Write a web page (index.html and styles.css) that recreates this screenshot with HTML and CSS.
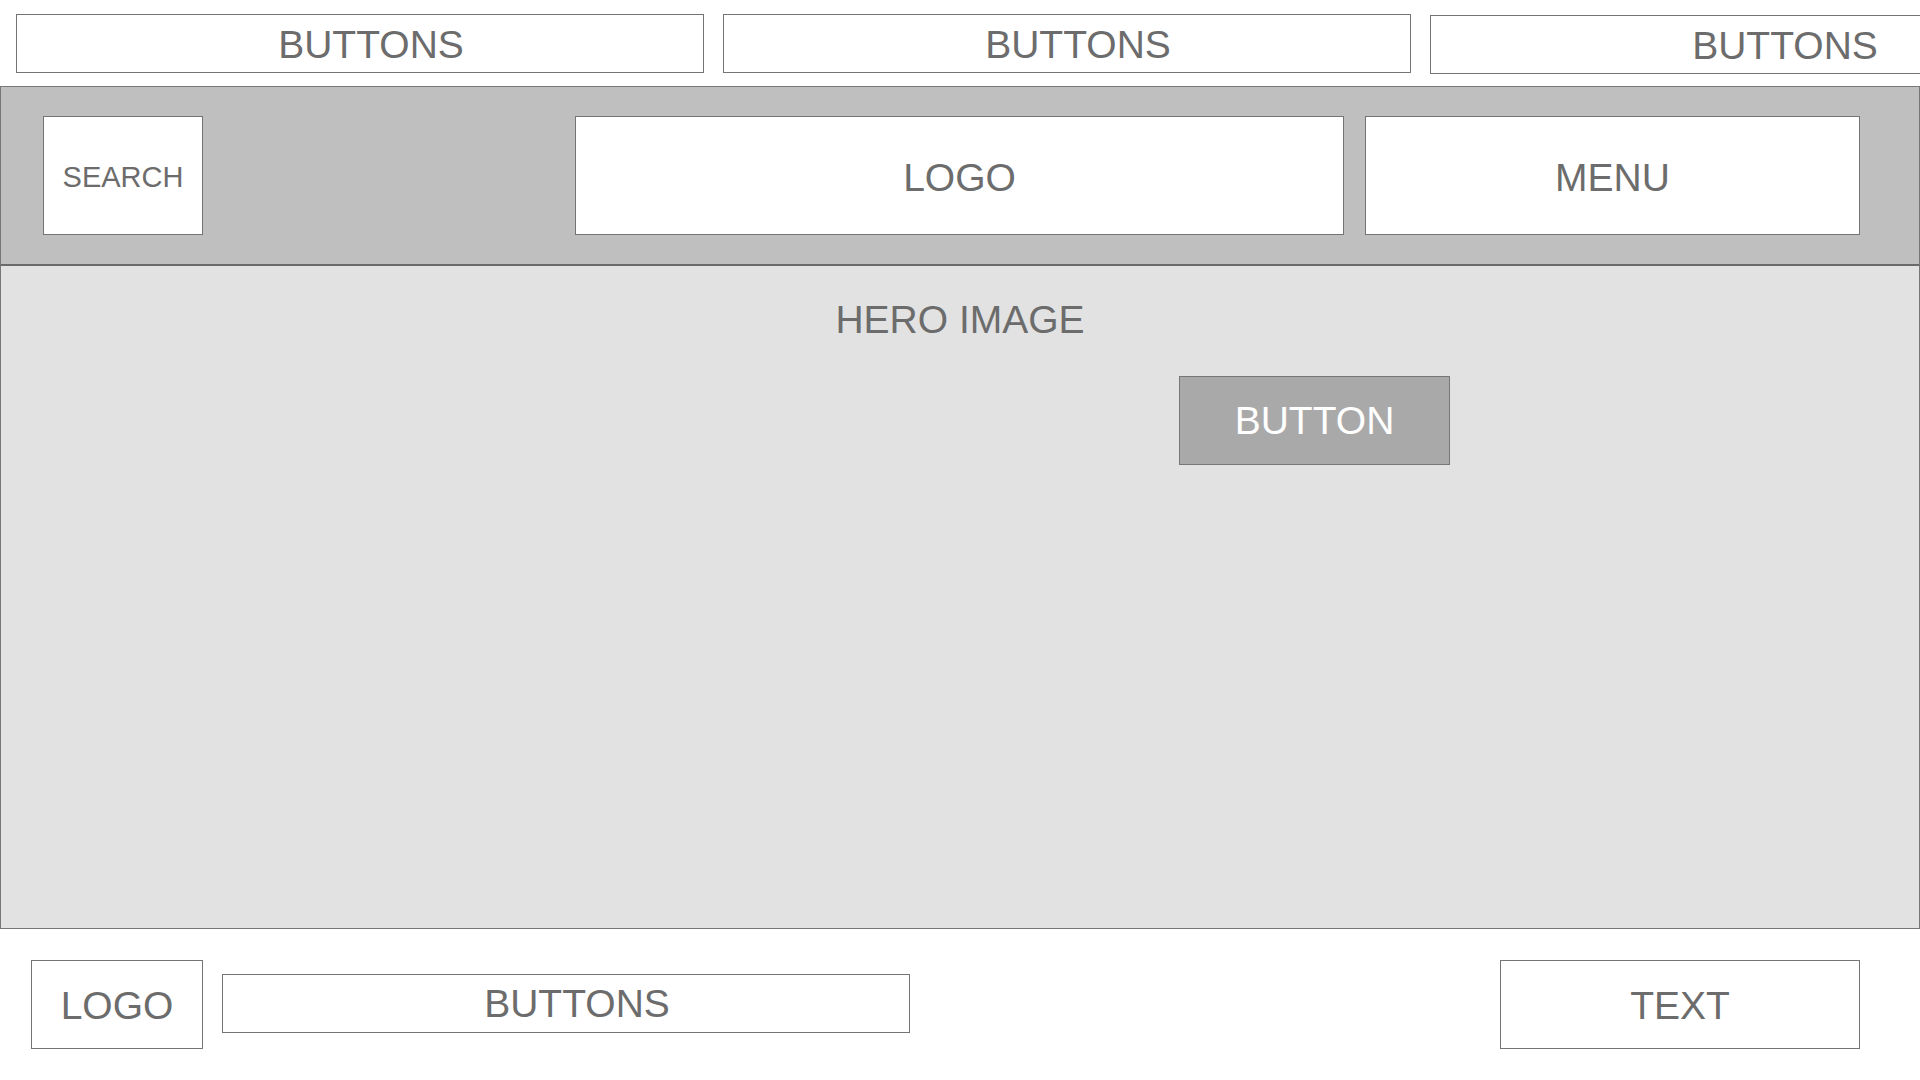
FILE: index.html
```html
<!DOCTYPE html>
<html lang="en">
<head>
<meta charset="utf-8">
<title>Wireframe</title>
<link rel="stylesheet" href="styles.css">
</head>
<body>
<div class="page">
  <div class="topbar">
    <div class="box top-btn btns">BUTTONS</div>
    <div class="box top-btn btns">BUTTONS</div>
    <div class="box top-btn btns top-btn-last">BUTTONS</div>
  </div>
  <header class="header">
    <div class="box search">SEARCH</div>
    <div class="box logo">LOGO</div>
    <div class="box menu">MENU</div>
  </header>
  <section class="hero">
    <div class="hero-title">HERO IMAGE</div>
    <div class="hero-btn">BUTTON</div>
  </section>
  <footer class="footer">
    <div class="box foot-logo">LOGO</div>
    <div class="box foot-btns btns">BUTTONS</div>
    <div class="box foot-text">TEXT</div>
  </footer>
</div>
</body>
</html>
```
FILE: styles.css
```css
html, body {
  margin: 0;
  padding: 0;
  background: #ffffff;
}
body {
  width: 1920px;
  height: 1080px;
  overflow: hidden;
  font-family: "Liberation Sans", Arial, sans-serif;
  color: #6c6c6c;
}
.page {
  width: 1920px;
  overflow: hidden;
}
.box {
  box-sizing: border-box;
  border: 1px solid #747474;
  background: #ffffff;
  display: flex;
  align-items: center;
  justify-content: center;
  font-size: 39px;
  line-height: 1.15;
  padding-top: 3px;
  white-space: nowrap;
}
.btns {
  padding-left: 22px;
}
.topbar {
  display: flex;
  gap: 19px;
  padding: 14px 0 0 16px;
  height: 86px;
  box-sizing: border-box;
  align-items: flex-start;
}
.top-btn {
  flex: 0 0 688px;
  height: 59px;
}
.top-btn-last {
  margin-top: 1px;
}
.header {
  box-sizing: border-box;
  height: 180px;
  background: #bfbfbf;
  border: 1px solid #777777;
  border-bottom: 2px solid #6a6a6a;
  display: flex;
  align-items: flex-start;
  padding: 29px 59px 0 42px;
  gap: 21px;
}
.search {
  width: 160px;
  height: 119px;
  font-size: 29px;
  padding-top: 5px;
  margin-right: auto;
}
.logo {
  width: 769px;
  height: 119px;
  padding-top: 5px;
}
.menu {
  width: 495px;
  height: 119px;
  padding-top: 5px;
}
.hero {
  box-sizing: border-box;
  height: 663px;
  background: #e2e2e2;
  border: 1px solid #777777;
  border-top: none;
  padding-top: 31px;
}
.hero-title {
  font-size: 39px;
  line-height: 45px;
  text-align: center;
}
.hero-btn {
  box-sizing: border-box;
  margin: 34px 0 0 1178px;
  width: 271px;
  height: 89px;
  background: #aaa9aa;
  border: 1px solid #777777;
  color: #ffffff;
  font-size: 39px;
  display: flex;
  align-items: center;
  justify-content: center;
}
.footer {
  display: flex;
  align-items: center;
  padding: 31px 60px 0 31px;
  gap: 19px;
}
.foot-logo {
  width: 172px;
  height: 89px;
}
.foot-btns {
  width: 688px;
  height: 59px;
  margin-top: -3px;
}
.foot-text {
  width: 360px;
  height: 89px;
  margin-left: auto;
}
```
